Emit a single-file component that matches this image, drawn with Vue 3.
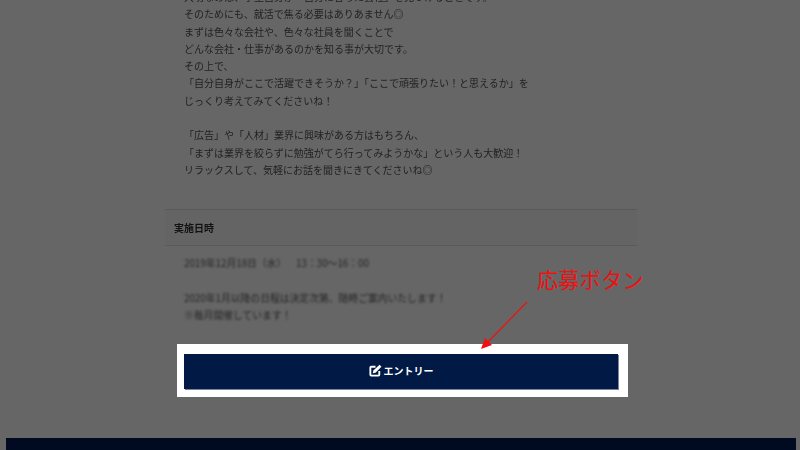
<template>
  <div class="page">
    <main class="article">
      <div class="body-text">
        <p v-for="(line, i) in introLines" :key="i">{{ line || '&#12288;' }}</p>
      </div>

      <h3 class="section-title">実施日時</h3>
      <div class="schedule">
        <p>2019年12月18日（水）　&#8194;13：30～16：00</p>
        <p class="gap">2020年1月以降の日程は決定次第、随時ご案内いたします！</p>
        <p>※毎月開催しています！</p>
      </div>

      <div class="entry-box">
        <button class="entry-button">
          <svg width="13" height="13" viewBox="0 0 24 24" fill="none" stroke="currentColor" stroke-width="3.4">
            <path d="M12 5H4a1.5 1.5 0 0 0-1.5 1.5V20A1.5 1.5 0 0 0 4 21.500h13.500A1.500 1.500 0 0 0 19 20v-7"></path>
            <path fill="currentColor" stroke="none" d="M19.500 1.500l3.500 3.500L12 16l-5 1 1-5z"></path>
          </svg>
          エントリー
        </button>
      </div>
    </main>

    <footer class="footer"></footer>

    <!-- annotation drawn over the screenshot -->
    <span class="note">応募ボタン</span>
    <svg class="note-arrow" width="60" height="60" viewBox="0 0 60 60" fill="none">
      <line x1="47" y1="2" x2="7" y2="43" stroke="#f01010" stroke-width="1.200"></line>
      <path d="M1 49L5 38l7 7z" fill="#f01010"></path>
    </svg>
  </div>
</template>

<script setup>
const introLines = [
  '大切なのは、学生自身が「自分に合った会社」を見つけることです。',
  'そのためにも、就活で焦る必要はありあません◎',
  'まずは色々な会社や、色々な社員を聞くことで',
  'どんな会社・仕事があるのかを知る事が大切です。',
  'その上で、',
  '「自分自身がここで活躍できそうか？」「ここで頑張りたい！と思えるか」を',
  'じっくり考えてみてくださいね！',
  '',
  '「広告」や「人材」業界に興味がある方はもちろん、',
  '「まずは業界を絞らずに勉強がてら行ってみようかな」という人も大歓迎！',
  'リラックスして、気軽にお話を聞きにきてくださいね◎'
]
</script>

<style>
body {
  margin: 0;
  background: #666;
}
</style>

<style scoped>
.page {
  position: relative;
  width: 800px;
  height: 450px;
  overflow: hidden;
  background: #666;
  font-family: "Noto Sans CJK JP", "Liberation Sans", sans-serif;
}

.article {
  width: 472px;
  margin: -12px 0 0 165px;
}

p {
  margin: 0;
}

.body-text {
  padding-left: 19px;
  font-size: 10px;
  line-height: 17.300px;
  color: #222;
  filter: blur(0.4px);
}

.section-title {
  margin: 31px 0 0;
  padding: 0 9px;
  height: 37px;
  line-height: 35px;
  font-size: 10px;
  font-weight: 700;
  color: #111;
  background: #646464;
  border-top: 1px solid #595959;
  border-bottom: 1px solid #595959;
  box-sizing: border-box;
  filter: blur(0.3px);
}

.schedule {
  padding: 9px 0 0 19px;
  font-size: 9.800px;
  line-height: 17.300px;
  color: #262626;
  filter: blur(1px);
}

.schedule .gap {
  margin-top: 17px;
}

.entry-box {
  box-sizing: border-box;
  width: 451px;
  height: 53px;
  margin: 20px 0 0 12px;
  padding: 10px 10px 8px 7px;
  background: #fff;
}

.entry-button {
  display: flex;
  align-items: center;
  justify-content: center;
  gap: 2px;
  width: 100%;
  height: 100%;
  padding: 0 0 2px;
  border: none;
  background: #001a45;
  box-shadow: 1px 1px 0 #7d8499;
  color: #fff;
  font-family: inherit;
  font-size: 10px;
  font-weight: 700;
}

.footer {
  height: 40px;
  margin: 41px 4px 0 6px;
  background: #000a20;
}

.note {
  position: absolute;
  left: 537px;
  top: 264px;
  font-size: 21.300px;
  line-height: 30px;
  color: #f01010;
}

.note-arrow {
  position: absolute;
  left: 480px;
  top: 300px;
}
</style>
